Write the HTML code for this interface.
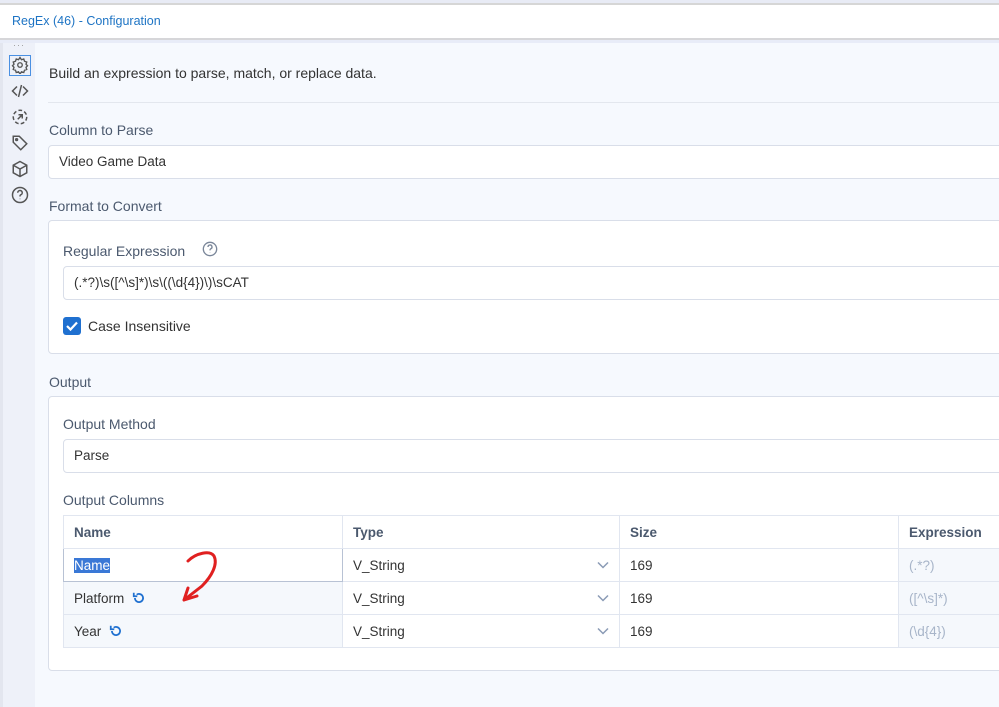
<!DOCTYPE html>
<html><head><meta charset="utf-8"><style>
*{box-sizing:border-box;margin:0;padding:0}
body{width:999px;height:707px;overflow:hidden;background:#f6f9fe;font-family:"Liberation Sans",sans-serif;position:relative;font-size:14px;color:#333}
.a{position:absolute}
.lbl{position:absolute;color:#4b596e;font-size:14px}
.inp{position:absolute;background:#fff;border:1px solid #d9dee9;border-radius:4px;height:34px;right:-6px;padding-left:10px;line-height:32px;font-size:13.5px;color:#333}
.panel{position:absolute;left:48px;right:-6px;background:#fff;border:1px solid #d9dee9;border-radius:4px}
.ic{position:absolute;left:11px;width:18px;height:18px}
table{border-collapse:collapse;position:absolute;left:63px;top:515px;width:950px;font-size:13.5px}
td,th{border:1px solid #e1e6f0;height:33px;padding-left:10px;text-align:left;color:#333}
th{font-weight:bold;color:#4b596e;background:#fff}
.t{background:#f5f8fc}
.ex{color:#a8b5c9;background:#f5f8fc}
.chev{float:right;margin-right:10px;margin-top:3px}
.rf{vertical-align:-2px;margin-left:8px}
</style></head><body>
<div class="a" style="left:0;top:0;width:999px;height:3px;background:#e8ebf5"></div>
<div class="a" style="left:0;top:3px;width:999px;height:2px;background:#d6d6d6"></div>
<div class="a" style="left:0;top:5px;width:999px;height:33px;background:#fff"></div>
<div class="a" style="left:0;top:38px;width:999px;height:2px;background:#d6d6d9"></div>
<div class="a" style="left:0;top:40px;width:999px;height:3px;background:#e8ecf8"></div>
<div class="a" style="left:12px;top:14px;font-size:12.5px;color:#1e74c4">RegEx (46) - Configuration</div>
<div class="a" style="left:0;top:43px;width:3px;height:664px;background:#e3e6ef"></div>
<div class="a" style="left:3px;top:43px;width:32px;height:664px;background:#eef1f9"></div>
<div class="a" style="left:13px;top:40px;font-size:9px;color:#999;letter-spacing:1px">···</div>
<div class="a" style="left:9px;top:55px;width:22px;height:21px;border:1.5px solid #4a90e2"></div>
<svg class="ic" style="top:56px" viewBox="0 0 24 24" fill="none" stroke="#555" stroke-width="1.8"><circle cx="12" cy="12" r="3"/><path d="M12 2l2 3 3-1 1 3 3 1-1 3 2 2-2 2 1 3-3 1-1 3-3-1-2 3-2-3-3 1-1-3-3-1 1-3-2-2 2-2-1-3 3-1 1-3 3 1z"/></svg>
<svg class="ic" style="top:82px" viewBox="0 0 24 24" fill="none" stroke="#555" stroke-width="2"><path d="M8 6l-6 6 6 6M16 6l6 6-6 6M14 4l-4 16"/></svg>
<svg class="ic" style="top:108px" viewBox="0 0 24 24" fill="none" stroke="#555" stroke-width="2"><circle cx="12" cy="12" r="9" stroke-dasharray="5 3"/><path d="M9 15l6-6M10 9h5v5"/></svg>
<svg class="ic" style="top:134px" viewBox="0 0 24 24" fill="none" stroke="#555" stroke-width="2"><path d="M3 3h8l10 10-8 8L3 11z"/><circle cx="7.5" cy="7.5" r="1.2"/></svg>
<svg class="ic" style="top:160px" viewBox="0 0 24 24" fill="none" stroke="#555" stroke-width="2"><path d="M12 2l9 5v10l-9 5-9-5V7zM3 7l9 5 9-5M12 12v10"/></svg>
<svg class="ic" style="top:186px" viewBox="0 0 24 24" fill="none" stroke="#555" stroke-width="2"><circle cx="12" cy="12" r="10"/><path d="M9 9a3 3 0 1 1 4 2.8c-1 .4-1 1.2-1 2.2M12 17v.5"/></svg>

<div class="a" style="left:49px;top:65px;font-size:14px;color:#333">Build an expression to parse, match, or replace data.</div>
<div class="a" style="left:48px;top:102px;width:951px;height:1px;background:#e3e7ee"></div>
<div class="lbl" style="left:49px;top:122px">Column to Parse</div>
<div class="inp" style="left:48px;top:145px">Video Game Data</div>
<div class="lbl" style="left:49px;top:198px">Format to Convert</div>
<div class="panel" style="top:220px;height:134px"></div>
<div class="lbl" style="left:63px;top:243px">Regular Expression</div>
<svg class="a" style="left:202px;top:241px" width="16" height="16" viewBox="0 0 24 24" fill="none" stroke="#7a8699" stroke-width="2"><circle cx="12" cy="12" r="10"/><path d="M9 9a3 3 0 1 1 4 2.8c-1 .4-1 1.2-1 2.2M12 17v.5"/></svg>
<div class="inp" style="left:63px;top:266px">(.*?)\s([^\s]*)\s\((\d{4})\)\sCAT</div>
<div class="a" style="left:63px;top:317px;width:18px;height:18px;background:#1f70d0;border-radius:3px"></div>
<svg class="a" style="left:63px;top:317px" width="18" height="18" viewBox="0 0 18 18" fill="none" stroke="#fff" stroke-width="2.2"><path d="M4 9l3.5 3.5L14 5.5"/></svg>
<div class="a" style="left:88px;top:318px;font-size:14px;color:#333">Case Insensitive</div>
<div class="lbl" style="left:49px;top:374px">Output</div>
<div class="panel" style="top:396px;height:275px"></div>
<div class="lbl" style="left:63px;top:416px">Output Method</div>
<div class="inp" style="left:63px;top:439px">Parse</div>
<div class="lbl" style="left:63px;top:492px">Output Columns</div>
<table>
<tr><th style="width:279px">Name</th><th style="width:277px">Type</th><th style="width:279px">Size</th><th>Expression</th></tr>
<tr><td style="background:#fff;border:1px solid #b8c2d4"><span style="background:#3a78d6;color:#fff">Name</span></td><td>V_String<svg class="chev" width="12" height="8" viewBox="0 0 12 8" fill="none" stroke="#8a9ab5" stroke-width="1.5"><path d="M1 1.5l5 5 5-5"/></svg></td><td>169</td><td class="ex">(.*?)</td></tr>
<tr><td class="t">Platform<svg class="rf" width="14" height="14" viewBox="0 0 24 24" fill="none" stroke="#1f70d0" stroke-width="3"><path d="M5 12a7 7 0 1 0 3-5.7"/><path d="M3 3v6h6" /></svg></td><td>V_String<svg class="chev" width="12" height="8" viewBox="0 0 12 8" fill="none" stroke="#8a9ab5" stroke-width="1.5"><path d="M1 1.5l5 5 5-5"/></svg></td><td>169</td><td class="ex">([^\s]*)</td></tr>
<tr><td class="t">Year<svg class="rf" width="14" height="14" viewBox="0 0 24 24" fill="none" stroke="#1f70d0" stroke-width="3"><path d="M5 12a7 7 0 1 0 3-5.7"/><path d="M3 3v6h6" /></svg></td><td>V_String<svg class="chev" width="12" height="8" viewBox="0 0 12 8" fill="none" stroke="#8a9ab5" stroke-width="1.5"><path d="M1 1.5l5 5 5-5"/></svg></td><td>169</td><td class="ex">(\d{4})</td></tr>
</table>
<svg class="a" style="left:180px;top:548px" width="45" height="56" viewBox="0 0 45 56" fill="none" stroke="#e02020" stroke-width="3" stroke-linecap="round"><path d="M8 13C16 5 30 2 34 8 C38 16 32 28 22 38 L4 52 M4 52 L8 40 M4 52 L17 48"/></svg>
</body></html>
